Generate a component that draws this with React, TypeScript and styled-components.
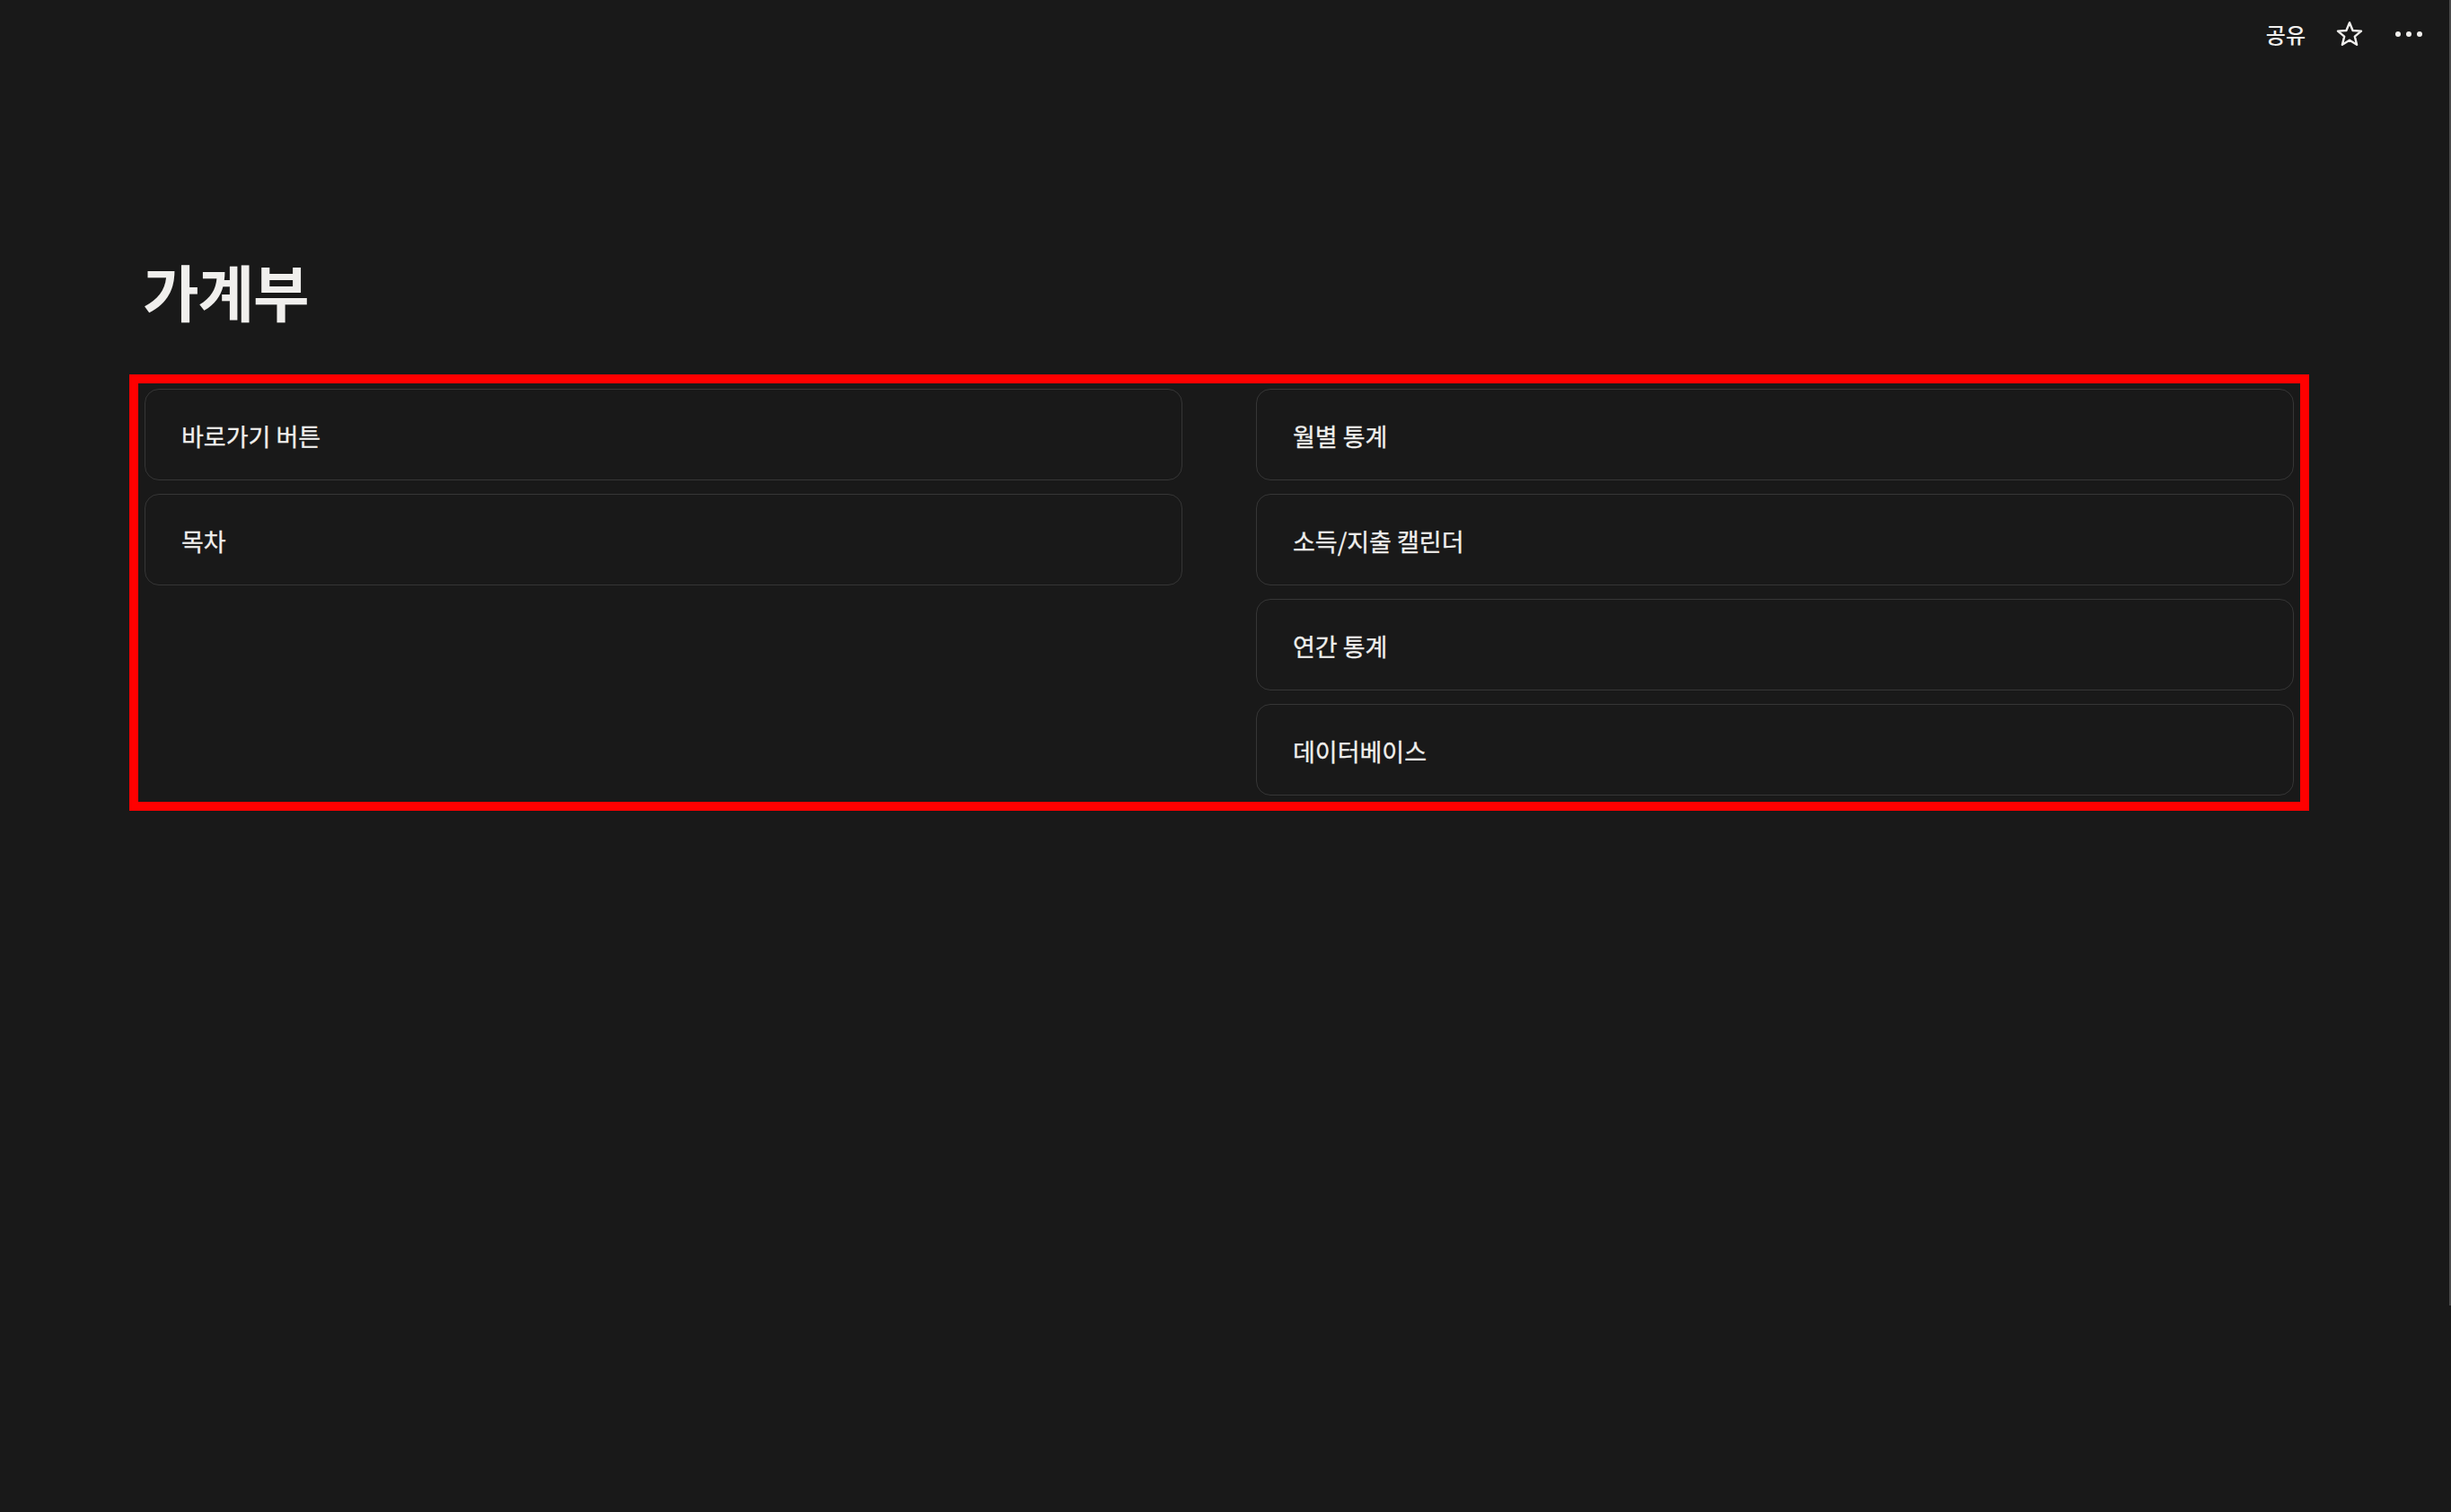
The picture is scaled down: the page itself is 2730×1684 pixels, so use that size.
import React from "react";
import styled, { createGlobalStyle } from "styled-components";

const Global = createGlobalStyle`
  html, body {
    margin: 0;
    padding: 0;
    background: #191919;
  }
  body {
    font-family: "Noto Sans CJK KR", "Noto Sans", sans-serif;
    color: #f0efed;
    overflow: hidden;
  }
`;

const Page = styled.div`
  position: relative;
  width: 2730px;
  height: 1684px;
  background: #191919;
`;

const Scrollbar = styled.div`
  position: absolute;
  top: 0;
  right: 0;
  width: 2px;
  height: 1454px;
  background: #4a4a4a;
`;

const TopBar = styled.header`
  height: 76px;
  display: flex;
  justify-content: flex-end;
  align-items: center;
  padding-right: 31px;
`;

const ShareText = styled.span`
  font-size: 24px;
  font-weight: 500;
  color: #f0efed;
  margin-right: 33px;
  line-height: 1;
`;

const IconBox = styled.span<{ $mr?: number }>`
  display: inline-flex;
  align-items: center;
  justify-content: center;
  margin-right: ${(p) => p.$mr ?? 0}px;
`;

const Main = styled.main`
  padding: 0 158px 0 144px;
`;

const Title = styled.h1`
  margin: 207px 0 0 15px;
  font-size: 68px;
  font-weight: 700;
  line-height: 1.2;
  color: #f0efed;
  letter-spacing: -1px;
`;

const Frame = styled.section`
  margin-top: 52px;
  border: 10px solid #ff0000;
  padding: 6px 7px 7px 7px;
  display: grid;
  grid-template-columns: 1fr 1fr;
  column-gap: 82px;
  align-items: start;
`;

const Column = styled.div`
  display: flex;
  flex-direction: column;
  gap: 15px;
`;

const Card = styled.div`
  box-sizing: content-box;
  height: 97px;
  border: 1px solid #363636;
  border-radius: 16px;
  display: flex;
  align-items: center;
  padding-left: 40px;
  padding-top: 3px;
  font-size: 27px;
  font-weight: 400;
  color: #f0efed;
  -webkit-text-stroke: 0.3px #f0efed;
`;

const StarIcon = () => (
  <svg width="32" height="32" viewBox="0 0 32 32" fill="none">
    <path
      d="M16 3.2 L19.6 12 L29 12.6 L21.8 18.6 L24.1 27.8 L16 22.8 L7.9 27.8 L10.2 18.6 L3 12.6 L12.4 12 Z"
      stroke="#f0efed"
      strokeWidth="2.4"
      strokeLinejoin="round"
    />
  </svg>
);

const DotsIcon = () => (
  <svg width="32" height="8" viewBox="0 0 32 8">
    <circle cx="4" cy="4" r="3" fill="#f0efed" />
    <circle cx="16" cy="4" r="3" fill="#f0efed" />
    <circle cx="28" cy="4" r="3" fill="#f0efed" />
  </svg>
);

const left = ["바로가기 버튼", "목차"];
const right = ["월별 통계", "소득/지출 캘린더", "연간 통계", "데이터베이스"];

export default function App() {
  return (
    <Page>
      <Global />
      <TopBar>
        <ShareText>공유</ShareText>
        <IconBox $mr={34}>
          <StarIcon />
        </IconBox>
        <IconBox>
          <DotsIcon />
        </IconBox>
      </TopBar>
      <Main>
        <Title>가계부</Title>
        <Frame>
          <Column>
            {left.map((t) => (
              <Card key={t}>{t}</Card>
            ))}
          </Column>
          <Column>
            {right.map((t) => (
              <Card key={t}>{t}</Card>
            ))}
          </Column>
        </Frame>
      </Main>
      <Scrollbar />
    </Page>
  );
}
